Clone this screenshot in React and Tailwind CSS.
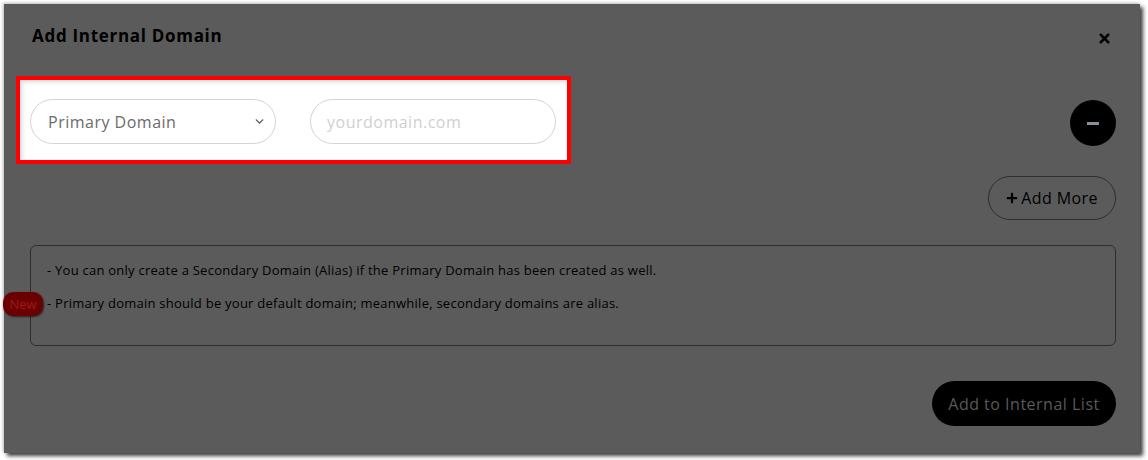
import { ChevronDown, X } from 'lucide-react';
import { FaPlus } from 'react-icons/fa';

export default function App() {
  return (
    <div className="w-[1148px] h-[460px] bg-white pl-[4px] pt-[4px] font-['Open_Sans',sans-serif]">
      <div className="relative w-[1136px] h-[449px] bg-[#5b5b5b] shadow-[3px_3px_4px_rgba(0,0,0,0.75),-1px_-1px_3px_rgba(0,0,0,0.25)]">
        {/* header */}
        <div className="flex items-center justify-between pl-[28px] pr-[28px] pt-[20px]">
          <h2 className="text-[17px] font-bold text-black leading-[24px] tracking-[0.7px]">Add Internal Domain</h2>
          <button className="mt-[4px] text-black">
            <X size={15} strokeWidth={4} />
          </button>
        </div>

        {/* domain row */}
        <div className="flex items-center justify-between pl-[12px] pr-[24px] mt-[28px]">
          <div className="flex items-center gap-[34px] w-[555px] h-[88px] border-4 border-[#ff0000] bg-white pl-[10px] pr-[11px] pt-[3px] shadow-[inset_2px_2px_4px_rgba(0,0,0,0.15)]">
            <div className="flex items-center justify-between w-[246px] h-[45px] rounded-full border border-[#d4d4d4] pl-[17px] pr-[9px]">
              <span className="text-[16px] tracking-[0.5px] text-[#6b6b6b]">Primary Domain</span>
              <ChevronDown size={13} strokeWidth={2.5} className="text-[#555]" />
            </div>
            <div className="flex items-center w-[246px] h-[45px] rounded-full border border-[#d4d4d4] pl-[16px]">
              <span className="text-[16px] tracking-[0.5px] text-[#cfcfcf]">yourdomain.com</span>
            </div>
          </div>
          <button className="flex items-center justify-center w-[46px] h-[46px] rounded-full bg-black mt-[6px]">
            <span className="block w-[12px] h-[3px] bg-[#8a9098]"></span>
          </button>
        </div>

        {/* add more */}
        <div className="flex justify-end pr-[24px] mt-[12px]">
          <button className="flex items-center gap-[3px] h-[44px] w-[128px] justify-center rounded-full border border-[#2f2f2f] text-[16px] tracking-[0.4px] text-black">
            <FaPlus size={12} />
            <span>Add More</span>
          </button>
        </div>

        {/* info */}
        <div className="relative ml-[26px] mr-[24px] mt-[25px] h-[101px] rounded-[6px] border border-[#2f2f2f] pl-[16px] pt-[15px] text-[13px] tracking-[0.25px] text-black leading-[18px]">
          <p>- You can only create a Secondary Domain (Alias) if the Primary Domain has been created as well.</p>
          <p className="mt-[15px]">- Primary domain should be your default domain; meanwhile, secondary domains are alias.</p>
          <span className="absolute left-[-28px] top-[46px] flex items-center justify-center w-[40px] h-[24px] rounded-[10px] bg-[#6b0000] text-[13px] tracking-normal text-[#a11a1a] shadow-[1px_1px_2px_rgba(0,0,0,0.6)]">New</span>
        </div>

        {/* submit */}
        <div className="flex justify-end pr-[24px] mt-[35px]">
          <button className="h-[45px] w-[184px] rounded-full bg-black text-[16px] tracking-[0.5px] text-[#5a5a5a]">
            Add to Internal List
          </button>
        </div>
      </div>
    </div>
  );
}
